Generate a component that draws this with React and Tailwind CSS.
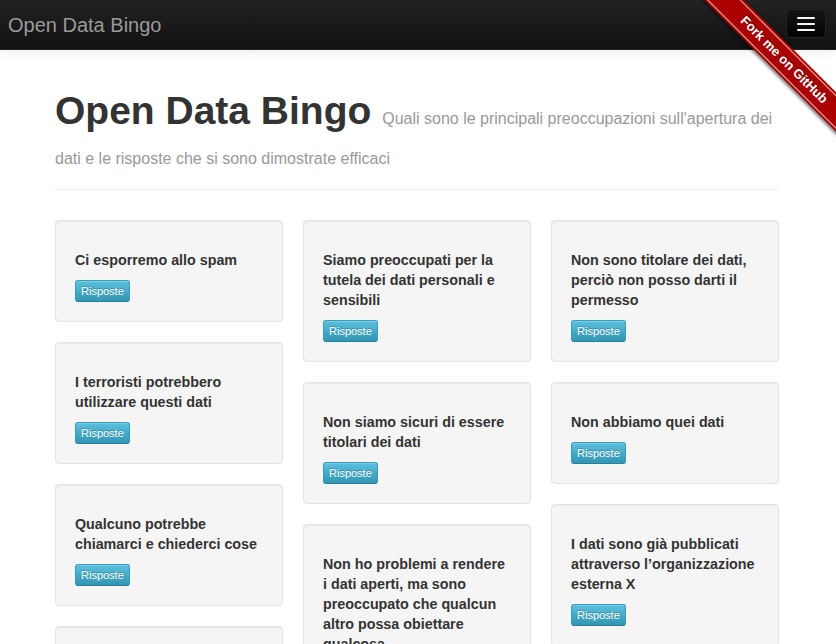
const columns = [
  [
    'Ci esporremo allo spam',
    'I terroristi potrebbero utilizzare questi dati',
    'Qualcuno potrebbe chiamarci e chiederci cose',
    'I dati potrebbero essere interpretati male',
  ],
  [
    'Siamo preoccupati per la tutela dei dati personali e sensibili',
    'Non siamo sicuri di essere titolari dei dati',
    'Non ho problemi a rendere i dati aperti, ma sono preoccupato che qualcun altro possa obiettare qualcosa',
  ],
  [
    'Non sono titolare dei dati, perciò non posso darti il permesso',
    'Non abbiamo quei dati',
    'I dati sono già pubblicati attraverso l’organizzazione esterna X',
  ],
]

function Card({ text }) {
  return (
    <div className="bg-[#f5f5f5] border border-[#e3e3e3] rounded-[4px] p-[19px] shadow-[inset_0_1px_1px_rgba(0,0,0,0.05)]">
      <h4 className="my-[10px] text-[14.3px] leading-[20px] font-bold text-[#333]">{text}</h4>
      <button className="block h-[22px] px-[5px] text-[11px] leading-[20px] text-white rounded-[3px] border border-[#3a9cb8] border-b-[#2a7f98] bg-gradient-to-b from-[#5bc0de] to-[#2f96b4] [text-shadow:0_-1px_0_rgba(0,0,0,0.25)] shadow-[inset_0_1px_0_rgba(255,255,255,0.2)]">
        Risposte
      </button>
    </div>
  )
}

export default function App() {
  return (
    <div className="min-h-screen bg-white font-['Liberation_Sans',Arial,sans-serif] text-[#333] relative overflow-hidden">
      {/* top bar */}
      <div className="h-[50px] bg-gradient-to-b from-[#222] to-[#111] border-b border-[#252525] shadow-[0_1px_10px_rgba(0,0,0,0.1)] flex items-center justify-between pl-2 pr-[10px]">
        <span className="text-[20px] text-[#999] leading-[20px]">Open Data Bingo</span>
        <button className="w-[40px] h-[29px] rounded-[4px] bg-gradient-to-b from-[#151515] to-[#040404] border border-[#222] flex flex-col items-center justify-center gap-[4px] mb-[2px]">
          <span className="block w-[18px] h-[2px] bg-[#f5f5f5] rounded-[1px]"></span>
          <span className="block w-[18px] h-[2px] bg-[#f5f5f5] rounded-[1px]"></span>
          <span className="block w-[18px] h-[2px] bg-[#f5f5f5] rounded-[1px]"></span>
        </button>
      </div>

      {/* github ribbon */}
      <div className="absolute top-0 right-0 w-[150px] h-[150px] overflow-hidden pointer-events-none z-10">
        <div className="absolute -left-[2px] top-[46px] w-[200px] h-[28px] rotate-45 bg-[#a00] py-[2px] shadow-[0_2px_3px_rgba(0,0,0,0.5)]">
          <div className="h-[24px] border-y border-white/70 flex items-center justify-center text-white text-[13px] font-bold [text-shadow:0_-1px_0_rgba(0,0,0,0.5)]">
            Fork me on GitHub
          </div>
        </div>
      </div>

      <div className="ml-[55px] w-[724px] pt-[41px]">
        <div className="pb-[18px] border-b border-[#eee] mb-[30px]">
          <h1 className="text-[39px] leading-[40px] font-bold text-[#333]">
            Open Data Bingo{' '}
            <small className="text-[16px] leading-none font-normal text-[#999]">
              Quali sono le principali preoccupazioni sull'apertura dei dati e le risposte che si sono dimostrate efficaci
            </small>
          </h1>
        </div>

        <div className="grid grid-cols-[228px_228px_228px] gap-x-5 items-start">
          {columns.map((col, i) => (
            <div key={i} className="flex flex-col gap-5">
              {col.map((t) => (
                <Card key={t} text={t} />
              ))}
            </div>
          ))}
        </div>
      </div>
    </div>
  )
}
